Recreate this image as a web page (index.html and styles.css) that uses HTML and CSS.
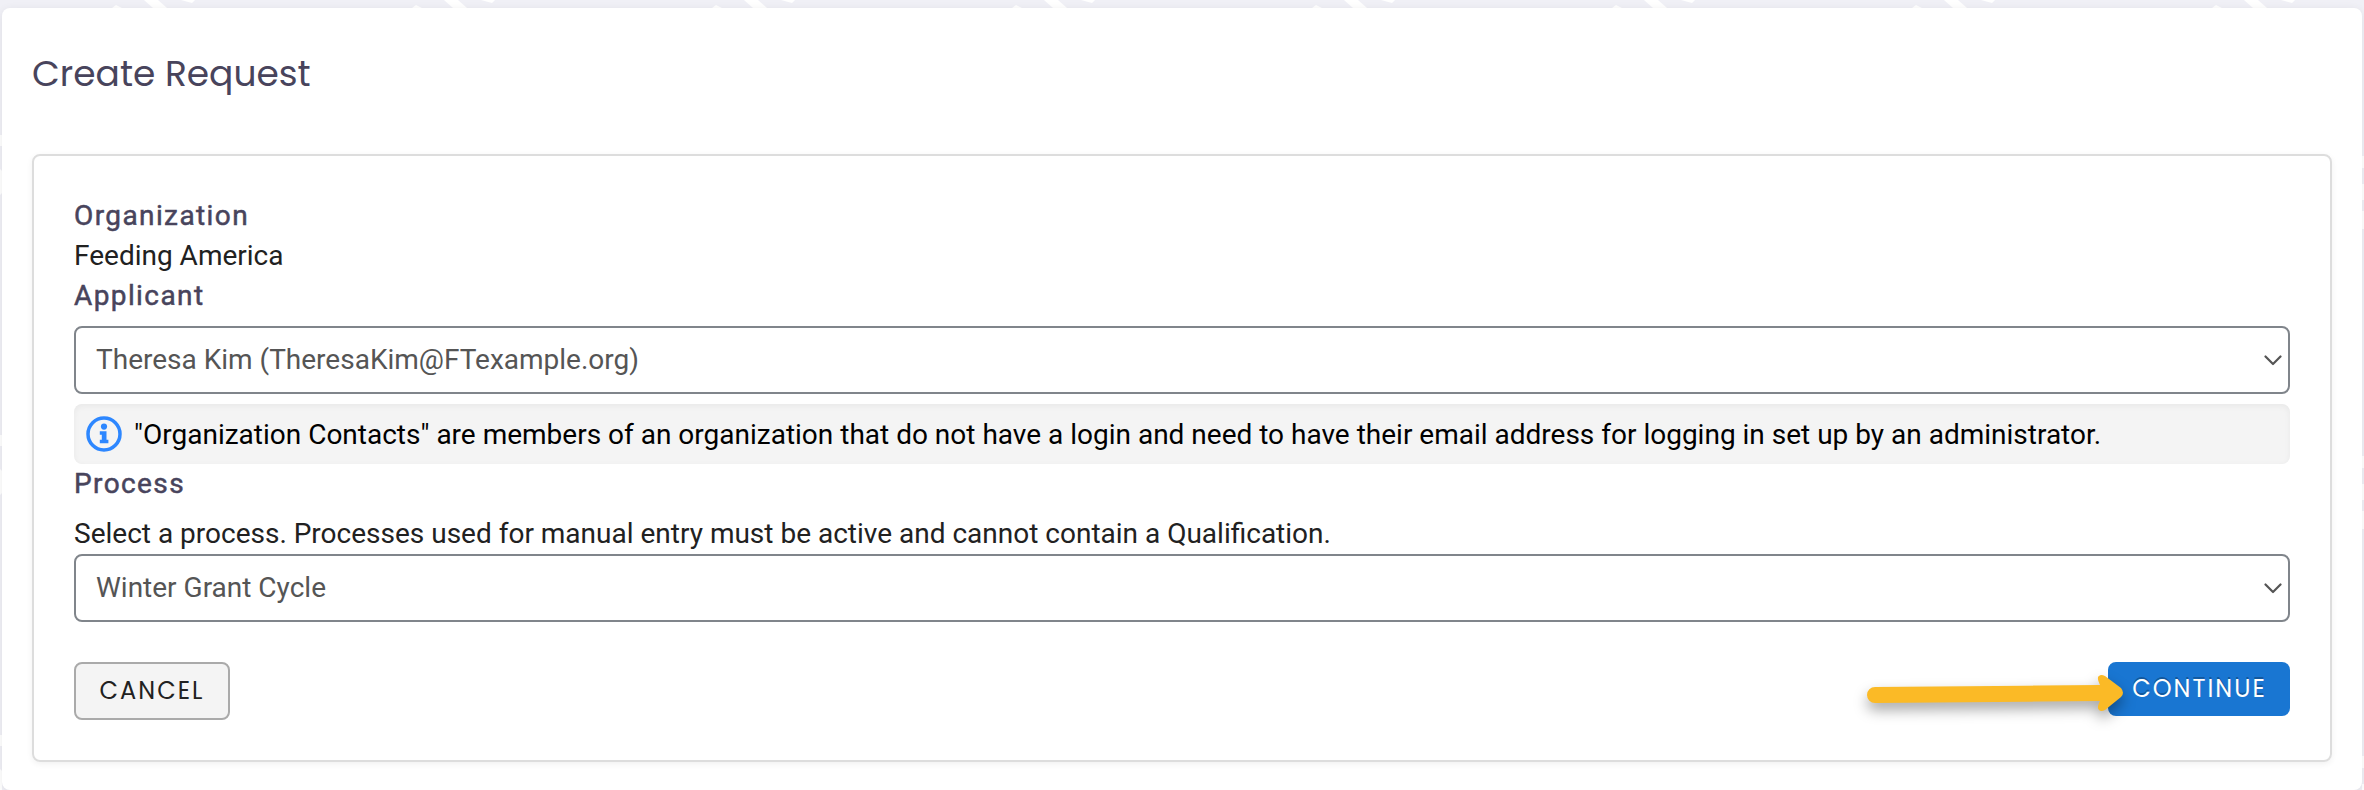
FILE: index.html
```html
<!DOCTYPE html>
<html lang="en">
<head>
  <meta charset="UTF-8" />
  <meta name="viewport" content="width=device-width, initial-scale=1.0"/>
  <title>Create Request</title>
  <link rel="stylesheet" href="styles.css">
</head>
<body>

<svg class="backdrop" aria-hidden="true">
  <defs>
    <pattern id="marks" width="300" height="300" patternUnits="userSpaceOnUse">
      <path d="M112 8l4-3 6 3zM144 0h14l9 8h-14zM181 0h14l-3 3z" fill="#fff"/>
      <path d="M0 135h2v11h-2zM0 169l2 2v22l-2 2zM262 156h2v12h-2zM262 184h2v16h-2zM262 211h2v18h-2z" fill="#fff"/>
    </pattern>
  </defs>
  <rect width="100%" height="100%" fill="url(#marks)"/>
</svg>

<main class="card">
  <h1 class="title">Create Request</h1>

  <form class="panel">
    <div class="label">Organization</div>
    <div class="value">Feeding America</div>

    <label class="label" for="applicant">Applicant</label>
    <div class="select-wrap applicant">
      <select id="applicant">
        <option>Theresa Kim (TheresaKim@FTexample.org)</option>
      </select>
      <svg class="chevron" viewBox="0 0 18 12"><path d="M1.5 1.5L9 9l7.5-7.5"/></svg>
    </div>

    <div class="info">
      <svg class="info-icon" viewBox="0 0 36 36">
        <circle cx="18" cy="18" r="16" fill="none" stroke="#2d87ff" stroke-width="3.5"/>
        <circle cx="18" cy="10.6" r="3.1" fill="#2d87ff"/>
        <path d="M13.8 15.3h6.7v8.5h1.9v3.4h-8.6v-3.4h2v-5.1h-2z" fill="#2d87ff"/>
      </svg>
      <span class="info-text">"Organization Contacts" are members of an organization that do not have a login and need to have their email address for logging in set up by an administrator.</span>
    </div>

    <label class="label" for="process">Process</label>
    <div class="help">Select a process. Processes used for manual entry must be active and cannot contain a Qualification.</div>
    <div class="select-wrap">
      <select id="process">
        <option>Winter Grant Cycle</option>
      </select>
      <svg class="chevron" viewBox="0 0 18 12"><path d="M1.5 1.5L9 9l7.5-7.5"/></svg>
    </div>

    <div class="actions">
      <button type="button" class="btn cancel">CANCEL</button>
      <div class="continue-wrap">
        <button type="button" class="btn continue">CONTINUE</button>
        <svg class="arrow" viewBox="0 0 270 50">
          <path d="M12 12L237 10C235 6 234 2 236 1Q238 -1 242 1L258 13Q262 18 258 22L242 35Q238 37 236 35C234 33 235 30 237 26L12 28A8 8 0 0 1 12 12z" fill="#fbba26"/>
        </svg>
      </div>
    </div>
  </form>
</main>

</body>
</html>
```
FILE: styles.css
```css
* {
  box-sizing: border-box;
}

body {
  margin: 0;
  padding: 8px 2px 0;
  font-family: Roboto, sans-serif;
  font-size: 28px;
  line-height: 40px;
  color: #212121;
  background: #f0f0f6;
}

.backdrop {
  position: absolute;
  top: 0;
  left: 0;
  width: 100%;
  height: 790px;
  z-index: -1;
}

.card {
  height: 782px;
  padding: 36px 30px 28px;
  background: #fff;
  border-radius: 8px;
  box-shadow: 0 2px 10px rgba(0, 0, 0, 0.08);
}

.title {
  margin: 0 0 50px;
  font-family: Poppins, Inter, sans-serif;
  font-size: 36px;
  font-weight: 400;
  line-height: 60px;
  color: #48445c;
}

.panel {
  padding: 40px;
  border: 2px solid #ddd;
  border-radius: 8px;
  box-shadow: 0 2px 6px rgba(0, 0, 0, 0.06);
}

.label {
  display: block;
  letter-spacing: 1.4px;
  color: #48445c;
  -webkit-text-stroke: 0.5px #48445c;
}

.select-wrap {
  position: relative;
}

.applicant {
  margin: 10px 0;
}

select {
  display: block;
  width: 100%;
  height: 68px;
  padding: 0 20px;
  font: inherit;
  color: #555;
  background: #fff;
  border: 2px solid #80858b;
  border-radius: 8px;
  appearance: none;
}

.chevron {
  position: absolute;
  top: 29px;
  right: 8px;
  width: 18px;
  height: 12px;
  fill: none;
  stroke: #555;
  stroke-width: 2.2;
  stroke-linecap: round;
  stroke-linejoin: round;
}

.info {
  display: flex;
  align-items: center;
  gap: 12px;
  height: 60px;
  padding: 0 12px;
  color: #000;
  background: #f4f4f4;
  border-radius: 8px;
  box-shadow: inset 0 2px 6px rgba(0, 0, 0, 0.05);
}

.info-icon {
  width: 36px;
  height: 36px;
}

.info-text {
  padding-top: 1px;
}

.help {
  margin-top: 10px;
}

.actions {
  display: flex;
  justify-content: space-between;
  align-items: flex-start;
  margin-top: 40px;
}

.btn {
  display: block;
  padding: 0;
  font-family: Poppins, Lato, sans-serif;
  font-size: 24px;
  border-radius: 8px;
}

.cancel {
  width: 156px;
  height: 58px;
  padding-bottom: 1px;
  letter-spacing: 2px;
  color: #212121;
  background: #f4f4f4;
  border: 2px solid #aaa;
}

.continue-wrap {
  position: relative;
}

.continue {
  width: 182px;
  height: 54px;
  padding: 0 0 1px 1px;
  letter-spacing: 2px;
  color: #fff;
  background: #1976d2;
  border: none;
  text-shadow: 0 -2px 0 rgba(0, 0, 0, 0.25);
}

/* pointer lying over the edge of the continue button */
.arrow {
  position: absolute;
  top: 13px;
  left: -245px;
  width: 270px;
  height: 50px;
  overflow: visible;
  filter: drop-shadow(0 7px 7px rgba(0, 0, 0, 0.35));
}
```
